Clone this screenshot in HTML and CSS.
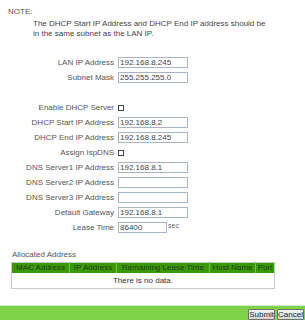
FILE: index.html
```html
<!DOCTYPE html>
<html lang="en">
<head>
    <meta charset="UTF-8">
    <title>DHCP Settings</title>
    <link rel="stylesheet" href="styles.css">
</head>
<body>

<div class="note-title">NOTE:</div>
<div class="note-text">
    The DHCP Start IP Address and DHCP End IP address should be<br>
    in the same subnet as the LAN IP.
</div>

<!-- LAN / DHCP form -->
<div class="form">
    <label>LAN IP Address</label>
    <div><input type="text" class="field" value="192.168.8.245"></div>
    <label>Subnet Mask</label>
    <div><input type="text" class="field" value="255.255.255.0"></div>

    <div class="spacer"></div>

    <label>Enable DHCP Server</label>
    <div><span class="check"></span></div>
    <label>DHCP Start IP Address</label>
    <div><input type="text" class="field" value="192.168.8.2"></div>
    <label>DHCP End IP Address</label>
    <div><input type="text" class="field" value="192.168.8.245"></div>
    <label>Assign IspDNS</label>
    <div><span class="check"></span></div>
    <label>DNS Server1 IP Address</label>
    <div><input type="text" class="field" value="192.168.8.1"></div>
    <label>DNS Server2 IP Address</label>
    <div><input type="text" class="field" value=""></div>
    <label>DNS Server3 IP Address</label>
    <div><input type="text" class="field" value=""></div>
    <label>Default Gateway</label>
    <div><input type="text" class="field" value="192.168.8.1"></div>
    <label>Lease Time</label>
    <div class="lease"><input type="text" class="field short" value="86400"><span class="unit">sec</span></div>
</div>

<!-- Allocated list -->
<div class="alloc-title">Allocated Address</div>
<table class="alloc">
    <tr>
        <th class="c-mac">MAC Address</th>
        <th class="c-ip">IP Address</th>
        <th class="c-lease">Remaining Lease Time</th>
        <th class="c-host">Host Name</th>
        <th class="c-port">Port</th>
    </tr>
    <tr>
        <td colspan="5">There is no data.</td>
    </tr>
</table>

<div class="footer">
    <button class="button">Submit</button>
    <button class="button">Cancel</button>
</div>

</body>
</html>
```

FILE: styles.css
```css
body {
    font-family: "Liberation Sans", Arial, sans-serif;
    font-size: 8px;
    margin: 0;
    padding: 0;
    color: #555;
    background-color: #fff;
    width: 305px;
    height: 320px;
    overflow: hidden;
}

.note-title {
    padding: 7px 0 0 8px;
    line-height: 10px;
}

.note-text {
    padding-left: 33px;
    margin-top: 2px;
    line-height: 10px;
    color: #444;
}

.form {
    display: grid;
    grid-template-columns: 114px 1fr;
    grid-auto-rows: 15px;
    column-gap: 4px;
    margin-top: 16px;
    align-items: center;
}

.form label {
    text-align: right;
    line-height: 10px;
}

.form .spacer {
    grid-column: 1 / 3;
}

.field {
    display: block;
    box-sizing: border-box;
    width: 70px;
    height: 11px;
    margin: 0;
    padding: 0 1px;
    border: 1px solid #a9b5c4;
    font-family: "Liberation Sans", Arial, sans-serif;
    font-size: 8px;
    color: #444;
    background: #fff;
}

.field.short {
    width: 49px;
}

.lease {
    display: flex;
    align-items: flex-start;
}

.unit {
    margin-left: 1px;
    font-size: 7px;
    line-height: 8px;
    color: #666;
}

.check {
    display: block;
    width: 6px;
    height: 6px;
    border: 1px solid #444;
    box-sizing: border-box;
    background: #fff;
}

.alloc-title {
    margin-top: 15px;
    padding-left: 12px;
    line-height: 10px;
}

.alloc {
    margin: 2px 0 0 11px;
    width: 258px;
    border-collapse: collapse;
    border: 1px solid #c8c8c8;
    table-layout: fixed;
}

.alloc th {
    background-color: #3a9a06;
    color: #1f3d12;
    font-weight: normal;
    height: 10px;
    padding: 0;
    line-height: 10px;
    border-right: 1px solid #7cbf5a;
    white-space: nowrap;
    overflow: hidden;
}

.alloc th:last-child {
    border-right: none;
}

.c-mac { width: 57px; }
.c-ip { width: 46px; }
.c-lease { width: 92px; }
.c-host { width: 45px; }
.c-port { width: 18px; }

.alloc td {
    text-align: center;
    height: 15px;
    padding: 0;
    color: #333;
}

.footer {
    margin-top: 16px;
    border-top: 1px solid #d6e8cc;
    background-color: #7ed348;
    height: 16px;
    display: flex;
    justify-content: flex-end;
    align-items: center;
    gap: 2px;
    padding-right: 1px;
}

.button {
    font-family: "Liberation Sans", Arial, sans-serif;
    font-size: 8px;
    height: 11px;
    padding: 0;
    line-height: 9px;
    color: #1a2a4a;
    background: linear-gradient(#f4f4f4, #d4d4d4);
    border: 1px solid #707070;
    border-radius: 1px;
    cursor: pointer;
}
```
